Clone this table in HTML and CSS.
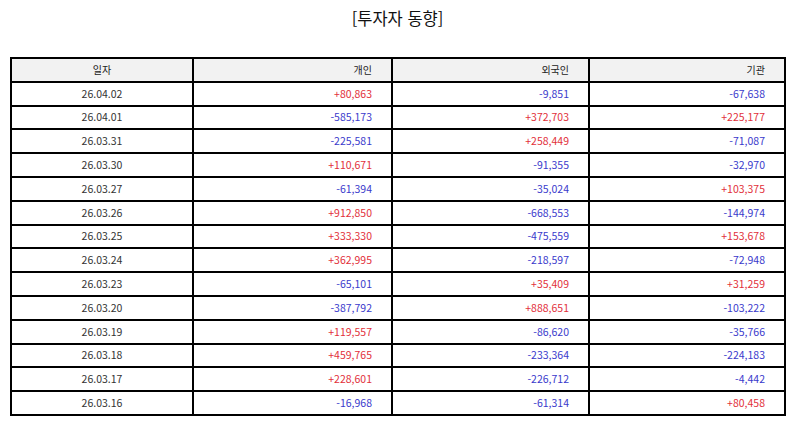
FILE: index.html
```html
<!DOCTYPE html>
<html lang="ko">
<head>
<meta charset="utf-8">
<title>투자자 동향</title>
<link rel="stylesheet" href="styles.css">
</head>
<body>
<h1 class="title">[투자자 동향]</h1>
<table class="grid">
<colgroup><col class="c1"><col class="c2"><col class="c3"><col class="c4"></colgroup>
<thead>
<tr><th class="date">일자</th><th>개인</th><th>외국인</th><th>기관</th></tr>
</thead>
<tbody>
<tr><td class="date">26.04.02</td><td class="up">+80,863</td><td class="dn">-9,851</td><td class="dn">-67,638</td></tr>
<tr><td class="date">26.04.01</td><td class="dn">-585,173</td><td class="up">+372,703</td><td class="up">+225,177</td></tr>
<tr><td class="date">26.03.31</td><td class="dn">-225,581</td><td class="up">+258,449</td><td class="dn">-71,087</td></tr>
<tr><td class="date">26.03.30</td><td class="up">+110,671</td><td class="dn">-91,355</td><td class="dn">-32,970</td></tr>
<tr><td class="date">26.03.27</td><td class="dn">-61,394</td><td class="dn">-35,024</td><td class="up">+103,375</td></tr>
<tr><td class="date">26.03.26</td><td class="up">+912,850</td><td class="dn">-668,553</td><td class="dn">-144,974</td></tr>
<tr><td class="date">26.03.25</td><td class="up">+333,330</td><td class="dn">-475,559</td><td class="up">+153,678</td></tr>
<tr><td class="date">26.03.24</td><td class="up">+362,995</td><td class="dn">-218,597</td><td class="dn">-72,948</td></tr>
<tr><td class="date">26.03.23</td><td class="dn">-65,101</td><td class="up">+35,409</td><td class="up">+31,259</td></tr>
<tr><td class="date">26.03.20</td><td class="dn">-387,792</td><td class="up">+888,651</td><td class="dn">-103,222</td></tr>
<tr><td class="date">26.03.19</td><td class="up">+119,557</td><td class="dn">-86,620</td><td class="dn">-35,766</td></tr>
<tr><td class="date">26.03.18</td><td class="up">+459,765</td><td class="dn">-233,364</td><td class="dn">-224,183</td></tr>
<tr><td class="date">26.03.17</td><td class="up">+228,601</td><td class="dn">-226,712</td><td class="dn">-4,442</td></tr>
<tr><td class="date">26.03.16</td><td class="dn">-16,968</td><td class="dn">-61,314</td><td class="up">+80,458</td></tr>
</tbody>
</table>
</body>
</html>
```
FILE: styles.css
```css
html, body {
  margin: 0;
  padding: 0;
  background: #ffffff;
}
body {
  padding: 0 9px 0 10px;
  font-family: "Noto Sans CJK KR", "Noto Sans", sans-serif;
  color: #222222;
}
.title {
  margin: 0;
  padding-top: 6px;
  height: 57px;
  box-sizing: border-box;
  text-align: center;
  font-size: 16.5px;
  font-weight: 400;
  line-height: 24px;
  color: #111111;
}
.grid {
  width: 774px;
  border-collapse: collapse;
  table-layout: fixed;
  font-size: 10.5px;
}
.c1 { width: 182px; }
.c2 { width: 199px; }
.c3 { width: 197px; }
.c4 { width: 196px; }
.grid tr {
  height: 23.8px;
}
.grid th,
.grid td {
  border: 2px solid #000000;
  padding: 0 19px 0 4px;
  text-align: right;
  line-height: 14px;
  white-space: nowrap;
}
.grid th {
  background: #f2f2f2;
  font-weight: 400;
  font-size: 10px;
  color: #222222;
}
.grid .date {
  text-align: center;
  padding: 0 4px;
}
.grid td.date {
  color: #333333;
}
.up { color: #e2303a; }
.dn { color: #3a3acc; }
```
